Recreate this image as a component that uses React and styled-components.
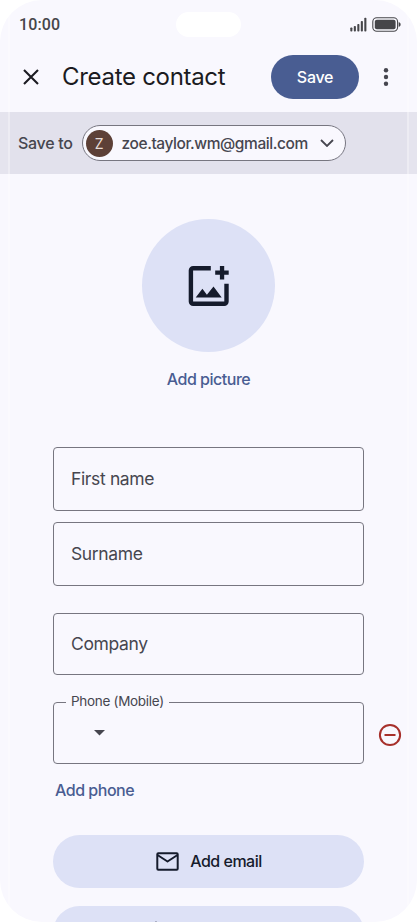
import styled, { createGlobalStyle } from 'styled-components';

const GlobalStyle = createGlobalStyle`
  * {
    box-sizing: border-box;
  }

  body {
    margin: 0;
    background: #fff;
    font-family: Inter, Roboto, sans-serif;
    color: #46464f;
  }

  button {
    padding: 0;
    border: none;
    background: none;
    font: inherit;
    color: inherit;
    cursor: pointer;
  }

  svg {
    display: block;
    flex: none;
  }
`;

const Screen = styled.div`
  position: relative;
  display: flex;
  flex-direction: column;
  width: 417px;
  height: 922px;
  overflow: hidden;
  border-radius: 42px;
  background: #f9f8fe;

  & > * {
    flex-shrink: 0;
  }
`;

const Edge = styled.div`
  position: absolute;
  top: 0;
  bottom: 0;
  ${({ $side }) => $side}: 0;
  width: 10px;
  background: rgba(255, 255, 255, 0.12);
  border-${({ $side }) => ($side === 'left' ? 'right' : 'left')}: 2px solid
    rgba(255, 255, 255, 0.3);
  pointer-events: none;
`;

const StatusBar = styled.div`
  display: grid;
  grid-template-columns: 1fr 65px 1fr;
  align-items: center;
  height: 48px;
  padding: 0 18px;
`;

const Time = styled.span`
  padding: 1px 0 0 1px;
  font: 500 16px Roboto, sans-serif;
  letter-spacing: 0.1px;
  color: #46464a;
`;

const Camera = styled.div`
  height: 25px;
  border-radius: 13px;
  background: #fff;
`;

const StatusIcons = styled.div`
  display: flex;
  justify-content: flex-end;
  align-items: center;
  gap: 5px;
  margin-right: -2px;
`;

const Toolbar = styled.header`
  display: flex;
  align-items: center;
  height: 64px;
  padding: 0 28px 6px 23px;
`;

const Title = styled.h1`
  flex: 1;
  margin: 0 0 0 23px;
  font-size: 24px;
  line-height: 30px;
  font-weight: 400;
  letter-spacing: -0.3px;
  color: #1b1b21;
`;

const SaveButton = styled.button`
  width: 88px;
  height: 44px;
  margin-right: 24px;
  border-radius: 22px;
  background: #495d92;
  color: #fff;
  font-size: 16px;
  font-weight: 500;
  letter-spacing: -0.3px;
`;

const AccountBar = styled.div`
  display: flex;
  align-items: center;
  gap: 9px;
  height: 62px;
  padding-left: 18px;
  background: #e2e1ec;
  font-size: 16px;
  font-weight: 500;
  letter-spacing: -0.3px;
`;

const AccountChip = styled.button`
  display: flex;
  align-items: center;
  width: 264px;
  height: 36px;
  padding: 0 11px 0 3px;
  border: 1px solid #777680;
  border-radius: 18px;
  background: #f9f8fe;
`;

const Avatar = styled.span`
  width: 27px;
  margin-right: 9px;
  border-radius: 50%;
  background: #5d4037;
  color: #e6dcd8;
  font-size: 14px;
  line-height: 27px;
  font-weight: 400;
`;

const Email = styled.span`
  flex: 1;
  text-align: left;
  white-space: nowrap;
  font-size: 15.5px;
  letter-spacing: -0.43px;
`;

const Picture = styled.section`
  display: flex;
  flex-direction: column;
  align-items: center;
  margin-top: 45px;
`;

const PictureCircle = styled.button`
  display: grid;
  place-items: center;
  width: 133px;
  height: 133px;
  border-radius: 50%;
  background: #dde1f6;
`;

const TextButton = styled.button`
  align-self: ${({ $align }) => $align || 'center'};
  color: #495d92;
  font-size: 16px;
  line-height: 20px;
  font-weight: 500;
  letter-spacing: -0.48px;
`;

const PictureLabel = styled(TextButton)`
  margin-top: 17px;
`;

const Form = styled.form`
  display: flex;
  flex-direction: column;
  width: 311px;
  margin: 58px 0 0 53px;
`;

const Field = styled.div`
  display: flex;
  align-items: center;
  height: ${({ $height }) => $height || 64}px;
  margin-bottom: ${({ $gap }) => $gap || 0}px;
  padding: 0 0 2px 17px;
  border: 1px solid #777680;
  border-radius: 4px;
  font-size: 17.5px;
  letter-spacing: -0.36px;
`;

const PhoneRow = styled.div`
  display: flex;
  align-items: center;
  gap: 14px;
  width: 350px;

  & > svg {
    margin-top: 4px;
  }
`;

const PhoneField = styled(Field)`
  position: relative;
  flex: none;
  width: 311px;
  padding: 0 0 0 40px;
`;

const FloatingLabel = styled.label`
  position: absolute;
  top: -10px;
  left: 12px;
  padding: 0 5px;
  background: #f9f8fe;
  font-size: 13.5px;
  line-height: 17px;
  letter-spacing: -0.3px;
  white-space: nowrap;
`;

const AddPhone = styled(TextButton)`
  margin: 16px 0 35px 2px;
`;

const TonalButton = styled.button`
  display: flex;
  flex: none;
  justify-content: center;
  align-items: center;
  gap: 11px;
  height: 53px;
  margin-bottom: 18px;
  padding: 0 ${({ $padRight }) => $padRight || 0}px 1px 1px;
  border-radius: 27px;
  background: #dde1f6;
  color: #151b2c;
  font-size: 16px;
  font-weight: 500;
  letter-spacing: -0.5px;
`;

const SignalIcon = () => (
  <svg width="17" height="15" viewBox="0 0 17 15" fill="#46464a">
    <rect x="0.3" y="10.5" width="2.1" height="4" rx="0.8" />
    <rect x="3.8" y="9" width="2.1" height="5.5" rx="0.8" />
    <rect x="7.3" y="7" width="2.1" height="7.5" rx="0.8" />
    <rect x="10.8" y="4" width="2.1" height="10.5" rx="0.8" />
    <rect x="14.3" y="0.8" width="2.1" height="13.7" rx="0.8" />
  </svg>
);

const BatteryIcon = () => (
  <svg width="29" height="15" viewBox="0 0 29 15" fill="#46464a">
    <rect
      x="0.8"
      y="0.8"
      width="24.8"
      height="13.4"
      rx="4"
      fill="none"
      stroke="#46464a"
      strokeWidth="1.1"
    />
    <rect x="2.8" y="2.8" width="20.8" height="9.4" rx="2" />
    <path d="M26.7 5.2c1.5.3 1.9 1.1 1.9 2.3s-.4 2-1.9 2.3z" />
  </svg>
);

const CloseIcon = () => (
  <svg width="16" height="16" viewBox="0 0 16 16">
    <path
      d="M1 1l14 14M15 1L1 15"
      fill="none"
      stroke="#1b1b21"
      strokeWidth="2.1"
    />
  </svg>
);

const MoreIcon = () => (
  <svg width="6" height="18" viewBox="0 0 6 18" fill="#46464f">
    <circle cx="3" cy="2.3" r="2.2" />
    <circle cx="3" cy="9" r="2.2" />
    <circle cx="3" cy="15.7" r="2.2" />
  </svg>
);

const ChevronIcon = () => (
  <svg width="14" height="8" viewBox="0 0 14 8">
    <path
      d="M1 1l6 6 6-6"
      fill="none"
      stroke="#46464f"
      strokeWidth="1.8"
    />
  </svg>
);

const AddPictureIcon = () => (
  <svg width="42" height="42" viewBox="0 0 42 42" fill="#151b2c">
    <path
      d="M22.8 3.2H5.2a2.3 2.3 0 0 0-2.3 2.3v31a2.3 2.3 0 0 0 2.3 2.3h31a2.3 2.3 0 0 0 2.3-2.3V18.8"
      fill="none"
      stroke="#151b2c"
      strokeWidth="4.4"
    />
    <path d="M27.2 5.5h4.7V1h4.3v4.5h4.5v4.3h-4.5v4.6h-4.3V9.8h-4.7z" />
    <path d="M7.7 32.5l6.7-8.7 4.5 6 6.6-8.4 8.2 11.1z" />
  </svg>
);

const RemoveIcon = () => (
  <svg width="24" height="24" viewBox="0 0 24 24">
    <g fill="none" stroke="#a7302b" strokeWidth="2">
      <circle cx="12" cy="12" r="10.1" />
      <path d="M6.5 12h11" />
    </g>
  </svg>
);

const MailIcon = () => (
  <svg width="23" height="19" viewBox="0 0 23 19">
    <g fill="none" stroke="#151b2c" strokeWidth="2" strokeLinejoin="round">
      <rect x="1.3" y="1.3" width="20.4" height="16.4" rx="1" />
      <path d="M1.5 3l10 6.5L21.5 3" />
    </g>
  </svg>
);

const CakeIcon = () => (
  <svg width="20" height="23" viewBox="0 0 20 23">
    <path
      d="M10 0.3c1 1.3 2 2.2 2 3.4a2 2 0 0 1-4 0c0-1.2 1-2.1 2-3.4z"
      fill="#151b2c"
    />
    <path
      d="M10 6v4M2 22V12a2 2 0 0 1 2-2h12a2 2 0 0 1 2 2v10zM2 16c2.7 2 5.3 2 8 0 2.7 2 5.3 2 8 0"
      fill="none"
      stroke="#151b2c"
      strokeWidth="2"
    />
  </svg>
);

const App = () => {
  return (
    <>
      <GlobalStyle />
      <Screen>
        <StatusBar>
          <Time>10:00</Time>
          <Camera />
          <StatusIcons>
            <SignalIcon />
            <BatteryIcon />
          </StatusIcons>
        </StatusBar>
        <Toolbar>
          <button type="button">
            <CloseIcon />
          </button>
          <Title>Create contact</Title>
          <SaveButton type="button">Save</SaveButton>
          <button type="button">
            <MoreIcon />
          </button>
        </Toolbar>
        <AccountBar>
          <span>Save to</span>
          <AccountChip type="button">
            <Avatar>Z</Avatar>
            <Email>zoe.taylor.wm@gmail.com</Email>
            <ChevronIcon />
          </AccountChip>
        </AccountBar>
        <Picture>
          <PictureCircle type="button">
            <AddPictureIcon />
          </PictureCircle>
          <PictureLabel type="button">Add picture</PictureLabel>
        </Picture>
        <Form>
          <Field $gap={11}>First name</Field>
          <Field $gap={27}>Surname</Field>
          <Field $height={62} $gap={27}>
            Company
          </Field>
          <PhoneRow>
            <PhoneField $height={62}>
              <FloatingLabel>Phone (Mobile)</FloatingLabel>
              <svg width="11" height="6" viewBox="0 0 11 6" fill="#46464f">
                <path d="M0 0h11L5.5 5.6z" />
              </svg>
            </PhoneField>
            <RemoveIcon />
          </PhoneRow>
          <AddPhone type="button" $align="flex-start">
            Add phone
          </AddPhone>
          <TonalButton type="button">
            <MailIcon />
            Add email
          </TonalButton>
          <TonalButton type="button" $padRight={106}>
            <CakeIcon />
          </TonalButton>
        </Form>
        <Edge $side="left" />
        <Edge $side="right" />
      </Screen>
    </>
  );
};

export default App;
